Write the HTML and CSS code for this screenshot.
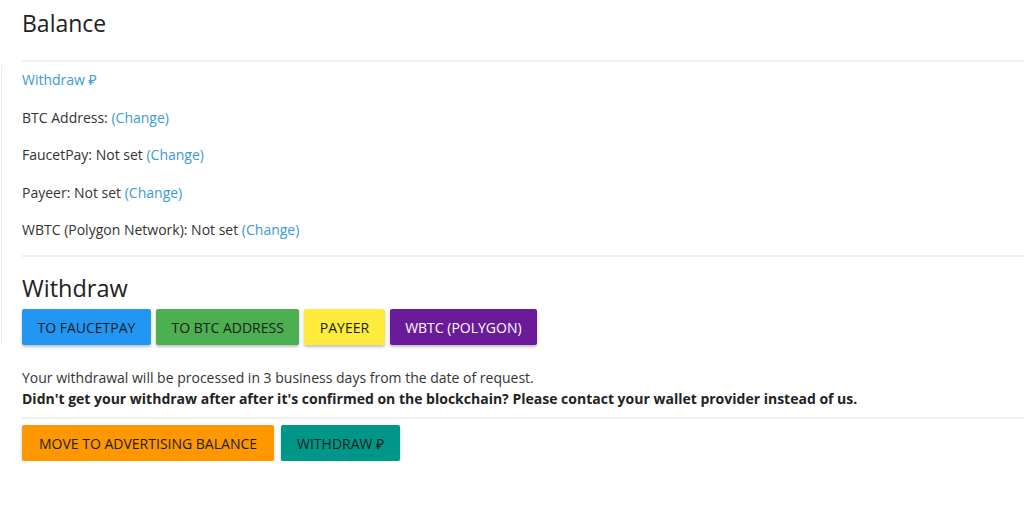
FILE: index.html
```html
<!DOCTYPE html>
<html>
<head>
<meta charset="utf-8">
<link rel="stylesheet" href="styles.css">
</head>
<body>
<div class="edge"></div>
<main class="page">
  <h1 class="title">Balance</h1>
  <hr class="rule rule-top">
  <section class="addresses">
    <p class="row"><a class="link">Withdraw ₽</a></p>
    <p class="row">BTC Address: <a class="link">(Change)</a></p>
    <p class="row">FaucetPay: Not set <a class="link">(Change)</a></p>
    <p class="row">Payeer: Not set <a class="link">(Change)</a></p>
    <p class="row">WBTC (Polygon Network): Not set <a class="link">(Change)</a></p>
  </section>
  <hr class="rule">
  <h2 class="subtitle">Withdraw</h2>
  <div class="btns">
    <button class="btn blue">TO FAUCETPAY</button>
    <button class="btn green">TO BTC ADDRESS</button>
    <button class="btn yellow">PAYEER</button>
    <button class="btn purple">WBTC (POLYGON)</button>
  </div>
  <p class="note">Your withdrawal will be processed in 3 business days from the date of request.<br><strong>Didn't get your withdraw after after it's confirmed on the blockchain? Please contact your wallet provider instead of us.</strong></p>
  <hr class="rule rule-bottom">
  <div class="btns btns-wide">
    <button class="btn orange">MOVE TO ADVERTISING BALANCE</button>
    <button class="btn teal">WITHDRAW ₽</button>
  </div>
</main>
</body>
</html>
```
FILE: styles.css
```css
* { box-sizing: border-box; }
html, body { margin: 0; padding: 0; background: #fff; }
body {
  font-family: "Open Sans", "Noto Sans", sans-serif;
  color: #333;
  font-size: 14px;
  overflow: hidden;
}
.edge {
  position: absolute;
  left: 0;
  top: 65px;
  width: 2px;
  height: 280px;
  border-right: 1px solid #ececec;
}
.page {
  padding: 0 0 0 22px;
}
.title {
  margin: 0;
  padding-top: 6px;
  font-size: 23px;
  font-weight: 400;
  line-height: 34px;
  color: #212121;
}
.rule {
  border: 0;
  border-top: 2px solid #f0f0f0;
  margin: 0;
}
.rule-top { margin-top: 20px; }
.addresses {
  display: flex;
  flex-direction: column;
  gap: 17.5px;
  padding: 8px 0 15px;
}
.row {
  margin: 0;
  line-height: 20px;
}
.link { color: #3a9ad6; text-decoration: none; }
.subtitle {
  margin: 0 0 3px;
  padding-top: 13px;
  font-size: 23.5px;
  font-weight: 400;
  line-height: 36px;
  color: #212121;
}
.btns {
  display: flex;
  gap: 5px;
}
.btns-wide { gap: 7px; }
.btn {
  font-family: inherit;
  font-size: 14px;
  height: 36px;
  border: 0;
  border-radius: 2px;
  padding: 0 15.5px;
  color: #1c1c1c;
  box-shadow: 0 2px 3px rgba(0,0,0,0.25);
}
.blue { background: #2196f3; }
.green { background: #4caf50; }
.yellow { background: #ffeb3b; }
.purple { background: #6a1b9a; color: #fff; }
.orange { background: #ff9800; padding: 0 17px; }
.teal { background: #009688; padding: 0 16px; }
.note {
  margin: 22px 0 0;
  line-height: 21px;
  color: #333;
}
.note strong { color: #222; }
.rule-bottom { margin-top: 8px; margin-bottom: 6px; }
```
